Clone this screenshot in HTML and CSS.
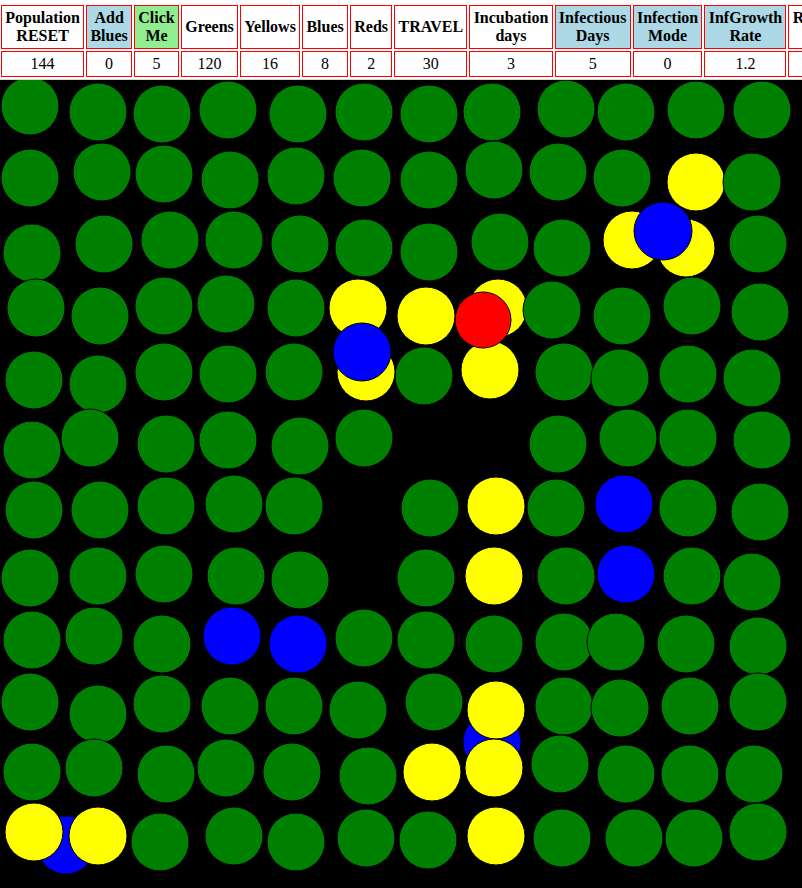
FILE: index.html
```html
<!DOCTYPE html>
<html>
<head>
    <title>Virus Simulation</title>
    <link rel="stylesheet" href="styles.css">
</head>
<body>
    <table class="stats">
        <tr>
            <th>Population<br>RESET</th>
            <th class="blueish">Add<br>Blues</th>
            <th class="greenish">Click<br>Me</th>
            <th>Greens</th>
            <th>Yellows</th>
            <th>Blues</th>
            <th>Reds</th>
            <th>TRAVEL</th>
            <th>Incubation<br>days</th>
            <th class="blueish">Infectious<br>Days</th>
            <th class="blueish">Infection<br>Mode</th>
            <th class="blueish">InfGrowth<br>Rate</th>
            <th>Recovery<br>days</th>
        </tr>
        <tr>
            <td>144</td>
            <td>0</td>
            <td>5</td>
            <td>120</td>
            <td>16</td>
            <td>8</td>
            <td>2</td>
            <td>30</td>
            <td>3</td>
            <td>5</td>
            <td>0</td>
            <td>1.2</td>
            <td>14</td>
        </tr>
    </table>

    <div class="world">
        <svg class="dots" width="802" height="808" viewBox="0 80 802 808">
            <!-- yellows that sit under their neighbours -->
            <circle class="yellow" cx="696" cy="182" r="29"/>
            <circle class="yellow" cx="498" cy="308" r="29"/>

            <!-- greens -->
            <circle class="green" cx="30" cy="106" r="29"/>
            <circle class="green" cx="98" cy="112" r="29"/>
            <circle class="green" cx="162" cy="114" r="29"/>
            <circle class="green" cx="228" cy="110" r="29"/>
            <circle class="green" cx="298" cy="114" r="29"/>
            <circle class="green" cx="364" cy="112" r="29"/>
            <circle class="green" cx="429" cy="114" r="29"/>
            <circle class="green" cx="492" cy="112" r="29"/>
            <circle class="green" cx="566" cy="109" r="29"/>
            <circle class="green" cx="626" cy="112" r="29"/>
            <circle class="green" cx="696" cy="110" r="29"/>
            <circle class="green" cx="762" cy="110" r="29"/>

            <circle class="green" cx="30" cy="178" r="29"/>
            <circle class="green" cx="102" cy="172" r="29"/>
            <circle class="green" cx="164" cy="174" r="29"/>
            <circle class="green" cx="230" cy="180" r="29"/>
            <circle class="green" cx="296" cy="176" r="29"/>
            <circle class="green" cx="362" cy="178" r="29"/>
            <circle class="green" cx="429" cy="180" r="29"/>
            <circle class="green" cx="494" cy="170" r="29"/>
            <circle class="green" cx="558" cy="172" r="29"/>
            <circle class="green" cx="622" cy="178" r="29"/>
            <circle class="green" cx="752" cy="182" r="29"/>

            <circle class="green" cx="32" cy="253" r="29"/>
            <circle class="green" cx="104" cy="244" r="29"/>
            <circle class="green" cx="170" cy="240" r="29"/>
            <circle class="green" cx="234" cy="240" r="29"/>
            <circle class="green" cx="300" cy="244" r="29"/>
            <circle class="green" cx="364" cy="248" r="29"/>
            <circle class="green" cx="429" cy="252" r="29"/>
            <circle class="green" cx="500" cy="242" r="29"/>
            <circle class="green" cx="562" cy="248" r="29"/>
            <circle class="green" cx="758" cy="244" r="29"/>

            <circle class="green" cx="36" cy="308" r="29"/>
            <circle class="green" cx="100" cy="316" r="29"/>
            <circle class="green" cx="164" cy="306" r="29"/>
            <circle class="green" cx="226" cy="304" r="29"/>
            <circle class="green" cx="296" cy="308" r="29"/>
            <circle class="green" cx="552" cy="310" r="29"/>
            <circle class="green" cx="622" cy="316" r="29"/>
            <circle class="green" cx="692" cy="306" r="29"/>
            <circle class="green" cx="760" cy="312" r="29"/>

            <circle class="green" cx="34" cy="380" r="29"/>
            <circle class="green" cx="98" cy="384" r="29"/>
            <circle class="green" cx="164" cy="372" r="29"/>
            <circle class="green" cx="228" cy="374" r="29"/>
            <circle class="green" cx="294" cy="372" r="29"/>
            <circle class="green" cx="424" cy="376" r="29"/>
            <circle class="green" cx="564" cy="372" r="29"/>
            <circle class="green" cx="620" cy="378" r="29"/>
            <circle class="green" cx="688" cy="374" r="29"/>
            <circle class="green" cx="752" cy="378" r="29"/>

            <circle class="green" cx="32" cy="450" r="29"/>
            <circle class="green" cx="90" cy="438" r="29"/>
            <circle class="green" cx="166" cy="444" r="29"/>
            <circle class="green" cx="228" cy="440" r="29"/>
            <circle class="green" cx="300" cy="446" r="29"/>
            <circle class="green" cx="364" cy="438" r="29"/>
            <circle class="green" cx="558" cy="444" r="29"/>
            <circle class="green" cx="628" cy="438" r="29"/>
            <circle class="green" cx="688" cy="438" r="29"/>
            <circle class="green" cx="762" cy="440" r="29"/>

            <circle class="green" cx="34" cy="510" r="29"/>
            <circle class="green" cx="100" cy="510" r="29"/>
            <circle class="green" cx="166" cy="506" r="29"/>
            <circle class="green" cx="234" cy="504" r="29"/>
            <circle class="green" cx="294" cy="506" r="29"/>
            <circle class="green" cx="430" cy="508" r="29"/>
            <circle class="green" cx="556" cy="508" r="29"/>
            <circle class="green" cx="688" cy="508" r="29"/>
            <circle class="green" cx="760" cy="512" r="29"/>

            <circle class="green" cx="30" cy="578" r="29"/>
            <circle class="green" cx="98" cy="576" r="29"/>
            <circle class="green" cx="164" cy="574" r="29"/>
            <circle class="green" cx="236" cy="576" r="29"/>
            <circle class="green" cx="300" cy="580" r="29"/>
            <circle class="green" cx="426" cy="578" r="29"/>
            <circle class="green" cx="566" cy="576" r="29"/>
            <circle class="green" cx="692" cy="576" r="29"/>
            <circle class="green" cx="752" cy="582" r="29"/>

            <circle class="green" cx="32" cy="640" r="29"/>
            <circle class="green" cx="94" cy="636" r="29"/>
            <circle class="green" cx="162" cy="644" r="29"/>
            <circle class="green" cx="364" cy="638" r="29"/>
            <circle class="green" cx="426" cy="640" r="29"/>
            <circle class="green" cx="494" cy="644" r="29"/>
            <circle class="green" cx="564" cy="642" r="29"/>
            <circle class="green" cx="616" cy="642" r="29"/>
            <circle class="green" cx="686" cy="644" r="29"/>
            <circle class="green" cx="758" cy="646" r="29"/>

            <circle class="green" cx="30" cy="702" r="29"/>
            <circle class="green" cx="98" cy="714" r="29"/>
            <circle class="green" cx="162" cy="704" r="29"/>
            <circle class="green" cx="230" cy="706" r="29"/>
            <circle class="green" cx="294" cy="706" r="29"/>
            <circle class="green" cx="358" cy="710" r="29"/>
            <circle class="green" cx="434" cy="702" r="29"/>
            <circle class="green" cx="564" cy="706" r="29"/>
            <circle class="green" cx="620" cy="708" r="29"/>
            <circle class="green" cx="690" cy="706" r="29"/>
            <circle class="green" cx="758" cy="702" r="29"/>

            <circle class="green" cx="32" cy="772" r="29"/>
            <circle class="green" cx="94" cy="768" r="29"/>
            <circle class="green" cx="166" cy="774" r="29"/>
            <circle class="green" cx="226" cy="768" r="29"/>
            <circle class="green" cx="292" cy="772" r="29"/>
            <circle class="green" cx="368" cy="776" r="29"/>
            <circle class="green" cx="560" cy="764" r="29"/>
            <circle class="green" cx="626" cy="774" r="29"/>
            <circle class="green" cx="690" cy="774" r="29"/>
            <circle class="green" cx="754" cy="774" r="29"/>

            <circle class="green" cx="160" cy="842" r="29"/>
            <circle class="green" cx="234" cy="836" r="29"/>
            <circle class="green" cx="296" cy="842" r="29"/>
            <circle class="green" cx="366" cy="838" r="29"/>
            <circle class="green" cx="428" cy="840" r="29"/>
            <circle class="green" cx="562" cy="838" r="29"/>
            <circle class="green" cx="634" cy="838" r="29"/>
            <circle class="green" cx="694" cy="838" r="29"/>
            <circle class="green" cx="758" cy="832" r="29"/>

            <!-- blues hidden behind yellows -->
            <circle class="blue" cx="66" cy="845" r="29"/>
            <circle class="blue" cx="492" cy="742" r="29"/>

            <!-- yellows -->
            <circle class="yellow" cx="632" cy="240" r="29"/>
            <circle class="yellow" cx="686" cy="248" r="29"/>
            <circle class="yellow" cx="358" cy="308" r="29"/>
            <circle class="yellow" cx="426" cy="316" r="29"/>
            <circle class="yellow" cx="366" cy="372" r="29"/>
            <circle class="yellow" cx="490" cy="370" r="29"/>
            <circle class="yellow" cx="496" cy="506" r="29"/>
            <circle class="yellow" cx="494" cy="576" r="29"/>
            <circle class="yellow" cx="496" cy="710" r="29"/>
            <circle class="yellow" cx="432" cy="772" r="29"/>
            <circle class="yellow" cx="494" cy="768" r="29"/>
            <circle class="yellow" cx="34" cy="832" r="29"/>
            <circle class="yellow" cx="98" cy="836" r="29"/>
            <circle class="yellow" cx="496" cy="836" r="29"/>

            <!-- blues -->
            <circle class="blue" cx="663" cy="231" r="29"/>
            <circle class="blue" cx="362" cy="352" r="29"/>
            <circle class="blue" cx="624" cy="504" r="29"/>
            <circle class="blue" cx="626" cy="574" r="29"/>
            <circle class="blue" cx="232" cy="636" r="29"/>
            <circle class="blue" cx="298" cy="644" r="29"/>

            <!-- reds -->
            <circle class="red" cx="483" cy="320" r="28"/>
        </svg>
    </div>
</body>
</html>
```

FILE: styles.css
```css
/* page */
html, body {
    overflow: hidden;
}

body {
    margin: 0;
    background-color: #fff;
    font-family: "Liberation Serif", "Times New Roman", serif;
    font-size: 16px;
}

/* stats table */
.stats {
    border-spacing: 2px;
    margin: 3px 0 0 -1px;
    white-space: nowrap;
}

.stats th,
.stats td {
    border: 1px solid red;
    padding: 3px 3.25px;
    text-align: center;
}

.stats th {
    font-weight: bold;
}

.stats td {
    font-weight: normal;
}

.blueish {
    background-color: lightblue;
}

.greenish {
    background-color: lightgreen;
}

/* world */
.world {
    width: 802px;
    height: 808px;
    background-color: #000;
    border-top: 1px solid #d8d8d8;
}

.dots {
    display: block;
}

.dots circle {
    stroke: #000;
    stroke-width: 1;
}

.green {
    fill: green;
}

.yellow {
    fill: yellow;
}

.blue {
    fill: blue;
}

.red {
    fill: red;
}
```
